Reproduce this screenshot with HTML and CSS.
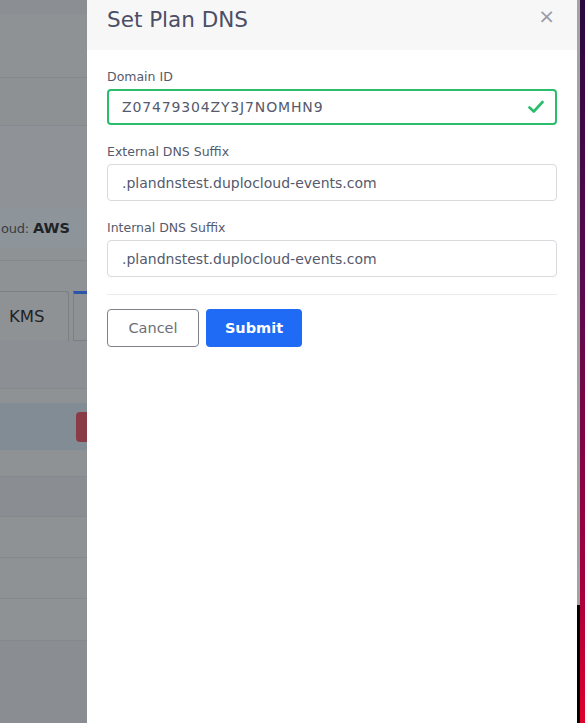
FILE: index.html
```html
<!DOCTYPE html>
<html>
<head>
<meta charset="utf-8">
<link rel="stylesheet" href="styles.css">
</head>
<body>
<div class="page">
  <div class="bg-row r1"></div>
  <div class="bg-row r2"></div>
  <div class="bg-row r3 line"></div>
  <div class="bg-row r4 line"></div>
  <div class="bg-row cloud"><span class="cloud-text">oud: <b>AWS</b></span></div>
  <div class="bg-row r5"></div>
  <div class="bg-row tabs line">
    <div class="tab">KMS</div>
    <div class="tab active"></div>
  </div>
  <div class="bg-row r6"></div>
  <div class="bg-row r7 line"></div>
  <div class="bg-row alert"><div class="red-btn"></div></div>
  <div class="bg-row r8"></div>
  <div class="bg-row t1 line"></div>
  <div class="bg-row t2 line"></div>
  <div class="bg-row t3 line"></div>
  <div class="bg-row t4 line"></div>
  <div class="bg-row foot"></div>
  <div class="strip"></div>
</div>

<div class="drawer">
  <div class="drawer-header">
    <h2 class="title">Set Plan DNS</h2>
    <span class="close">&times;</span>
  </div>
  <div class="drawer-body">
    <div class="field">
      <label class="label">Domain ID</label>
      <div class="input valid">
        <span class="wide">Z07479304ZY3J7NOMHN9</span>
        <svg class="check" width="16" height="14" viewBox="0 0 16 14"><path d="M1.5 7.5 L5.8 11.5 L14.5 2" fill="none" stroke="#2bbd6b" stroke-width="2.6" stroke-linecap="round" stroke-linejoin="round"/></svg>
      </div>
    </div>
    <div class="field">
      <label class="label">External DNS Suffix</label>
      <div class="input"><span>.plandnstest.duplocloud-events.com</span></div>
    </div>
    <div class="field last">
      <label class="label">Internal DNS Suffix</label>
      <div class="input"><span>.plandnstest.duplocloud-events.com</span></div>
    </div>
    <hr class="divider">
    <div class="actions">
      <button class="btn cancel">Cancel</button>
      <button class="btn submit">Submit</button>
    </div>
  </div>
</div>
</body>
</html>
```

FILE: styles.css
```css
html {
  background: linear-gradient(180deg, #2a0a3c 0%, #5a0a4c 40%, #a0003e 80%, #e0002a 100%);
  height: 100%;
}
body {
  margin: 0;
  font-family: "DejaVu Sans", sans-serif;
  height: 723px;
  overflow: hidden;
}
.page {
  width: 580px;
  height: 723px;
  background: #8e9194;
  position: relative;
}
.bg-row { box-sizing: border-box; }
.line { border-top: 1px solid #85888c; }
.r1 { height: 14px; background: #8b8e92; }
.r2 { height: 63px; background: #8f9295; }
.r3 { height: 48px; background: #8e9194; }
.r4 { height: 83px; background: #8f9296; }
.cloud {
  height: 40px;
  background: #8d959b;
  display: flex;
  align-items: center;
  font-size: 13px;
  color: #3a3d42;
  padding-left: 1px;
}
.cloud-text { letter-spacing: -0.2px; }
.cloud-text b { color: #1f2226; letter-spacing: 0; font-size: 14.5px; }
.r5 { height: 12px; background: #8f9295; }
.tabs {
  height: 80px;
  padding-top: 30px;
  display: flex;
  gap: 4px;
  background: #8f9295;
}
.tab {
  width: 69px;
  height: 50px;
  border: 1px solid #7c7f83;
  border-left: none;
  border-bottom: none;
  border-radius: 0 3px 0 0;
  box-sizing: border-box;
  display: flex;
  align-items: center;
  padding-left: 9px;
  font-size: 16.5px;
  color: #1f2226;
}
.tab.active {
  width: 20px;
  border: 1px solid #7c7f83;
  border-top: 3px solid #2a55a8;
  border-right: none;
}
.r6 { height: 48px; background: #8c8f93; }
.r7 { height: 15px; background: #8f9295; }
.alert {
  height: 47px;
  background: #818c94;
  display: flex;
  align-items: center;
  padding-left: 76px;
}
.red-btn { width: 20px; height: 30px; background: #8a3c46; border-radius: 4px; }
.r8 { height: 26px; background: #8f9295; }
.t1 { height: 40px; background: #8a8d91; }
.t2 { height: 41px; background: #8f9295; }
.t3 { height: 41px; background: #8f9295; }
.t4 { height: 42px; background: #8f9295; }
.foot { height: 83px; background: #8a8d91; border-top: 1px solid #85888c; }
.strip {
  position: absolute;
  right: 0;
  top: 0;
  width: 3px;
  height: 605px;
  background: #a3a3a3;
}
.page::after {
  content: "";
  position: absolute;
  right: 0;
  top: 605px;
  width: 3px;
  bottom: 0;
  background: #000;
}

.drawer {
  position: fixed;
  top: 0;
  left: 87px;
  width: 490px;
  height: 723px;
  background: #fff;
}
.drawer-header {
  height: 50px;
  background: #f7f7f7;
  display: flex;
  align-items: center;
  justify-content: space-between;
  padding: 0 22px 0 20px;
  box-sizing: border-box;
}
.title {
  margin: 0;
  font-size: 21.5px;
  font-weight: 500;
  color: #4c4e66;
  padding-bottom: 11px;
}
.close {
  font-size: 20px;
  color: #9a9aa6;
  padding-bottom: 18px;
}
.drawer-body {
  padding: 19px 20px 0 20px;
}
.field {
  display: flex;
  flex-direction: column;
  gap: 5px;
  margin-bottom: 19px;
}
.field.last { margin-bottom: 0; }
.label {
  font-size: 12.5px;
  color: #555a6c;
}
.input {
  height: 37px;
  box-sizing: border-box;
  border: 1px solid #d9d9de;
  border-radius: 4px;
  display: flex;
  align-items: center;
  justify-content: space-between;
  padding: 0 14px;
  font-size: 14px;
  color: #555a6c;
}
.input.valid {
  height: 36px;
  border: 2px solid #2bbd6b;
  padding: 0 11px 0 13px;
}
.wide { letter-spacing: 0.85px; }
.check { display: block; }
.divider {
  border: none;
  border-top: 1px solid #ececec;
  margin: 17px 0 14px 0;
}
.actions {
  display: flex;
  gap: 7px;
}
.btn {
  height: 38px;
  border-radius: 4px;
  font-family: inherit;
  font-size: 14.5px;
  box-sizing: border-box;
}
.cancel {
  width: 92px;
  border: 1px solid #7f8186;
  background: #fff;
  color: #6c6f78;
}
.submit {
  width: 96px;
  border: none;
  background: #1f6bf5;
  color: #fff;
  font-weight: bold;
}
```
